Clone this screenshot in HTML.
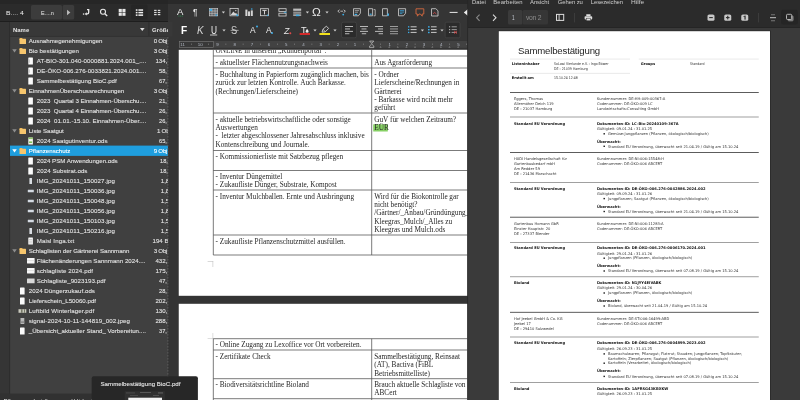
<!DOCTYPE html>
<html lang="de"><head><meta charset="utf-8"><title>Desktop</title>
<style>
html,body{margin:0;padding:0;background:#3a3a3a;}
#root{position:relative;width:800px;height:400px;overflow:hidden;background:#3a3a3a;}
#root div,#root svg{position:absolute;}
#root svg.l{left:0;top:0;}
#root div.p{left:0;top:0;width:800px;height:400px;will-change:transform;}
.t{white-space:pre;transform-origin:0 50%;}
</style></head><body><div id="root">
<div class="p" style="filter:blur(0.22px)">
<svg class="l" width="800" height="400" viewBox="0 0 800 400">
<rect x="0" y="0" width="168.5" height="400" fill="#404040"/>
<rect x="0" y="0" width="168" height="4" fill="#262626"/>
<rect x="0" y="4" width="168" height="17.5" fill="#2b2b2b"/>
<rect x="0" y="21" width="173" height="1" fill="#1e1e1e"/>
<rect x="0" y="22" width="10" height="378" fill="#353535"/>
<rect x="9.2" y="22" width="0.9" height="378" fill="#2c2c2c"/>
<rect x="0" y="393.6" width="168" height="7" fill="#313131"/>
<rect x="10" y="22" width="162.5" height="14.6" fill="#383838"/>
<rect x="10" y="35.9" width="158" height="0.8" fill="#303030"/>
<rect x="148.5" y="22" width="0.8" height="13.8" fill="#2a2a2a"/>
<rect x="31" y="5" width="31" height="14.5" fill="#3c3c3c" rx="1.5"/>
<rect x="62.6" y="5" width="11.6" height="14.5" fill="#3c3c3c" rx="1.5"/>
<g transform="translate(66 9.5)"><path d="M1 0.3 L4.4 3 L1 5.7Z" fill="#b8b8b8"/></g>
<g transform="translate(82 8)"><path d="M5 1.6 H6.7 V4.6 Q6.7 5.9 5.4 5.9 H4.4" fill="none" stroke="#e8e8e8" stroke-width="1.3"/><path d="M4.8 4.2 L2.6 5.9 L4.8 7.5Z" fill="#e8e8e8"/><rect x="0.9" y="5.4" width="1.3" height="1.3" fill="#e8e8e8"/></g>
<g transform="translate(99 8)"><circle cx="4" cy="3.8" r="2.5" fill="none" stroke="#e8e8e8" stroke-width="1.1"/><path d="M5.9 5.8 L8.2 8" stroke="#e8e8e8" stroke-width="1.4"/></g>
<rect x="118.7" y="8.9" width="3.1" height="3.2" fill="#e8e8e8"/>
<rect x="118.7" y="12.6" width="3.1" height="3.2" fill="#e8e8e8"/>
<rect x="122.4" y="8.9" width="3.1" height="3.2" fill="#e8e8e8"/>
<rect x="122.4" y="12.6" width="3.1" height="3.2" fill="#e8e8e8"/>
<rect x="131.2" y="4.5" width="16.3" height="15" fill="#262626" rx="1.5"/>
<rect x="135.8" y="9.3" width="1.7" height="1.5" fill="#f0f0f0"/>
<rect x="138.4" y="9.3" width="4.7" height="1.5" fill="#f0f0f0"/>
<rect x="135.8" y="11.85" width="1.7" height="1.5" fill="#f0f0f0"/>
<rect x="138.4" y="11.85" width="4.7" height="1.5" fill="#f0f0f0"/>
<rect x="135.8" y="14.4" width="1.7" height="1.5" fill="#f0f0f0"/>
<rect x="138.4" y="14.4" width="4.7" height="1.5" fill="#f0f0f0"/>
<rect x="154.1" y="9.8" width="2.5" height="1.2" fill="#dcdcdc"/>
<rect x="157.8" y="9.8" width="2.5" height="1.2" fill="#dcdcdc"/>
<rect x="154.1" y="11.9" width="2.5" height="1.2" fill="#dcdcdc"/>
<rect x="157.8" y="11.9" width="2.5" height="1.2" fill="#dcdcdc"/>
<rect x="154.1" y="14" width="2.5" height="1.2" fill="#dcdcdc"/>
<rect x="157.8" y="14" width="2.5" height="1.2" fill="#dcdcdc"/>
<g transform="translate(139.8 27.8)"><path d="M0.2 0.3 H4.8 L2.5 3.1Z" fill="#e0e0e0"/></g>
<rect x="19.5" y="37.9" width="3" height="1.6" fill="#eeb451" rx="0.5"/>
<rect x="19.5" y="38.8" width="6.5" height="5.2" fill="#f7c66d" rx="0.5"/>
<g transform="translate(12 48.8)"><path d="M0.2 0.5 H4.8 L2.5 3.6Z" fill="#8e8e8e"/></g>
<rect x="19.5" y="47.9" width="3" height="1.6" fill="#eeb451" rx="0.5"/>
<rect x="19.5" y="48.8" width="6.5" height="5.2" fill="#f7c66d" rx="0.5"/>
<rect x="28.3" y="57.5" width="4.6" height="7.1" fill="#fbfbfb" rx="0.4"/>
<rect x="29.1" y="59.4" width="0.9" height="3.4" fill="#cdcdcd"/>
<rect x="28.3" y="67.5" width="4.6" height="7.1" fill="#fbfbfb" rx="0.4"/>
<rect x="29.1" y="69.4" width="0.9" height="3.4" fill="#cdcdcd"/>
<rect x="28.3" y="77.5" width="4.6" height="7.1" fill="#fbfbfb" rx="0.4"/>
<g transform="translate(12 88.8)"><path d="M0.2 0.5 H4.8 L2.5 3.6Z" fill="#8e8e8e"/></g>
<rect x="19.5" y="87.9" width="3" height="1.6" fill="#eeb451" rx="0.5"/>
<rect x="19.5" y="88.8" width="6.5" height="5.2" fill="#f7c66d" rx="0.5"/>
<rect x="28.3" y="97.5" width="4.6" height="7.1" fill="#fbfbfb" rx="0.4"/>
<rect x="28.3" y="107.5" width="4.6" height="7.1" fill="#fbfbfb" rx="0.4"/>
<rect x="28.3" y="117.5" width="4.6" height="7.1" fill="#fbfbfb" rx="0.4"/>
<g transform="translate(12 128.8)"><path d="M0.2 0.5 H4.8 L2.5 3.6Z" fill="#8e8e8e"/></g>
<rect x="19.5" y="127.9" width="3" height="1.6" fill="#eeb451" rx="0.5"/>
<rect x="19.5" y="128.8" width="6.5" height="5.2" fill="#f7c66d" rx="0.5"/>
<rect x="28.3" y="137.5" width="4.6" height="7.1" fill="#f4f7f0" rx="0.4"/>
<rect x="28.3" y="137.5" width="4.6" height="1.6" fill="#8fc46a"/>
<rect x="29.1" y="141.4" width="3" height="1.6" fill="#7fbf55"/>
<rect x="10" y="145.6" width="158.5" height="10.3" fill="#1f9ede"/>
<g transform="translate(12 148.8)"><path d="M0.2 0.5 H4.8 L2.5 3.6Z" fill="#ffffff"/></g>
<rect x="19.5" y="147.9" width="3" height="1.6" fill="#eeb451" rx="0.5"/>
<rect x="19.5" y="148.8" width="6.5" height="5.2" fill="#f7c66d" rx="0.5"/>
<rect x="28.3" y="157.5" width="4.6" height="7.1" fill="#fbfbfb" rx="0.4"/>
<rect x="28.3" y="167.5" width="4.6" height="7.1" fill="#fbfbfb" rx="0.4"/>
<rect x="29.4" y="178" width="2.6" height="6" fill="#d9dde2" rx="0.3"/>
<rect x="27.8" y="189.7" width="6" height="2.6" fill="#d4dae2" rx="0.3"/>
<rect x="27.8" y="199.7" width="6" height="2.6" fill="#d4dae2" rx="0.3"/>
<rect x="27.8" y="209.7" width="6" height="2.6" fill="#d4dae2" rx="0.3"/>
<rect x="27.8" y="219.7" width="6" height="2.6" fill="#d4dae2" rx="0.3"/>
<rect x="29.4" y="228" width="2.6" height="6" fill="#d9dde2" rx="0.3"/>
<rect x="28.3" y="237.5" width="4.6" height="7.1" fill="#f6f6f6" rx="0.4"/>
<rect x="29" y="239" width="3.2" height="0.6" fill="#b5b5b5"/>
<rect x="29" y="240.8" width="3.2" height="0.6" fill="#b5b5b5"/>
<rect x="29" y="242.6" width="3.2" height="0.6" fill="#b5b5b5"/>
<g transform="translate(12 248.8)"><path d="M0.2 0.5 H4.8 L2.5 3.6Z" fill="#8e8e8e"/></g>
<rect x="19.5" y="247.9" width="3" height="1.6" fill="#eeb451" rx="0.5"/>
<rect x="19.5" y="248.8" width="6.5" height="5.2" fill="#f7c66d" rx="0.5"/>
<rect x="27" y="258" width="7.6" height="5.4" fill="#f6f6f6" rx="0.3"/>
<rect x="27" y="260.2" width="7.6" height="0.5" fill="#cfcfcf"/>
<rect x="27" y="268" width="7.6" height="5.4" fill="#f6f6f6" rx="0.3"/>
<rect x="27" y="270.2" width="7.6" height="0.5" fill="#cfcfcf"/>
<rect x="27" y="278.4" width="7.6" height="4.8" fill="#d8d8d8" rx="0.3"/>
<rect x="20" y="287.5" width="4.6" height="7.1" fill="#fbfbfb" rx="0.4"/>
<rect x="20" y="297.5" width="4.6" height="7.1" fill="#fbfbfb" rx="0.4"/>
<rect x="18.5" y="309.2" width="7.8" height="3.6" fill="#c9c9bd"/>
<rect x="21.1" y="309.2" width="1.4" height="3.6" fill="#6d705f"/>
<rect x="24.1" y="309.2" width="0.9" height="3.6" fill="#6d705f"/>
<rect x="20.5" y="318" width="3.8" height="6" fill="#b9b9b9"/>
<rect x="20.5" y="321.4" width="3.8" height="1.4" fill="#858585"/>
<rect x="20" y="327.5" width="4.6" height="7.1" fill="#fbfbfb" rx="0.4"/>
</svg>
<div class="t" style="top:9px;font-size:6.2px;line-height:7px;height:7px;color:#eeeeee;font-family:'Liberation Sans', sans-serif;left:6.4px;transform:scaleX(1.1007);">B.... 4</div>
<div class="t" style="top:9px;font-size:6.2px;line-height:7px;height:7px;color:#eeeeee;font-family:'Liberation Sans', sans-serif;left:40.5px;transform:scaleX(0.8856);">E....n</div>
<div class="t" style="top:27px;font-size:5.9px;line-height:6px;height:6px;color:#e4e4e4;font-family:'Liberation Sans', sans-serif;font-weight:700;left:13px;letter-spacing:0.038px;">Name</div>
<div class="t" style="top:27px;font-size:5.9px;line-height:6px;height:6px;color:#e4e4e4;font-family:'Liberation Sans', sans-serif;font-weight:700;left:152px;letter-spacing:0.128px;">Größe</div>
<div class="t" style="top:37px;font-size:6.15px;line-height:7px;height:7px;color:#e2e2e2;font-family:'Liberation Sans', sans-serif;left:28.75px;letter-spacing:0.016px;-webkit-text-stroke:0.1px currentColor;">Ausnahmegenehmigungen</div>
<div class="t" style="top:37px;font-size:6.15px;line-height:7px;height:7px;color:#e2e2e2;font-family:'Liberation Sans', sans-serif;left:153.75px;letter-spacing:-0.257px;-webkit-text-stroke:0.1px currentColor;">0 Obj</div>
<div class="t" style="top:47px;font-size:6.15px;line-height:7px;height:7px;color:#e2e2e2;font-family:'Liberation Sans', sans-serif;left:28.75px;letter-spacing:0.066px;-webkit-text-stroke:0.1px currentColor;">Bio bestätigungen</div>
<div class="t" style="top:47px;font-size:6.15px;line-height:7px;height:7px;color:#e2e2e2;font-family:'Liberation Sans', sans-serif;left:153.75px;letter-spacing:-0.257px;-webkit-text-stroke:0.1px currentColor;">3 Obj</div>
<div class="t" style="top:57px;font-size:6.15px;line-height:7px;height:7px;color:#e2e2e2;font-family:'Liberation Sans', sans-serif;left:36.75px;letter-spacing:0.057px;-webkit-text-stroke:0.1px currentColor;">AT-BIO-301.040-0000881.2024.001_....</div>
<div class="t" style="top:57px;font-size:6.15px;line-height:7px;height:7px;color:#e2e2e2;font-family:'Liberation Sans', sans-serif;left:155.5px;letter-spacing:-0.088px;-webkit-text-stroke:0.1px currentColor;">134,</div>
<div class="t" style="top:67px;font-size:6.15px;line-height:7px;height:7px;color:#e2e2e2;font-family:'Liberation Sans', sans-serif;left:36.75px;letter-spacing:0.027px;-webkit-text-stroke:0.1px currentColor;">DE-ÖKO-006.276-0033821.2024.001....</div>
<div class="t" style="top:67px;font-size:6.15px;line-height:7px;height:7px;color:#e2e2e2;font-family:'Liberation Sans', sans-serif;left:159.25px;transform:scaleX(0.9243);-webkit-text-stroke:0.1px currentColor;">58,</div>
<div class="t" style="top:77px;font-size:6.15px;line-height:7px;height:7px;color:#e2e2e2;font-family:'Liberation Sans', sans-serif;left:36.75px;letter-spacing:0.017px;-webkit-text-stroke:0.1px currentColor;">Sammelbestätigung BioC.pdf</div>
<div class="t" style="top:77px;font-size:6.15px;line-height:7px;height:7px;color:#e2e2e2;font-family:'Liberation Sans', sans-serif;left:159.25px;transform:scaleX(0.9243);-webkit-text-stroke:0.1px currentColor;">67,</div>
<div class="t" style="top:87px;font-size:6.15px;line-height:7px;height:7px;color:#e2e2e2;font-family:'Liberation Sans', sans-serif;left:28.75px;letter-spacing:-0.015px;-webkit-text-stroke:0.1px currentColor;">EinnahmenÜberschussrechnungen</div>
<div class="t" style="top:87px;font-size:6.15px;line-height:7px;height:7px;color:#e2e2e2;font-family:'Liberation Sans', sans-serif;left:153.75px;letter-spacing:-0.257px;-webkit-text-stroke:0.1px currentColor;">3 Obj</div>
<div class="t" style="top:97px;font-size:6.15px;line-height:7px;height:7px;color:#e2e2e2;font-family:'Liberation Sans', sans-serif;left:36.75px;letter-spacing:-0.020px;-webkit-text-stroke:0.1px currentColor;">2023  Quartal 3 Einnahmen-Überschu....</div>
<div class="t" style="top:97px;font-size:6.15px;line-height:7px;height:7px;color:#e2e2e2;font-family:'Liberation Sans', sans-serif;left:159.25px;transform:scaleX(0.9243);-webkit-text-stroke:0.1px currentColor;">21,</div>
<div class="t" style="top:107px;font-size:6.15px;line-height:7px;height:7px;color:#e2e2e2;font-family:'Liberation Sans', sans-serif;left:36.75px;letter-spacing:-0.020px;-webkit-text-stroke:0.1px currentColor;">2023  Quartal 4 Einnahmen-Überschu....</div>
<div class="t" style="top:107px;font-size:6.15px;line-height:7px;height:7px;color:#e2e2e2;font-family:'Liberation Sans', sans-serif;left:159.25px;transform:scaleX(0.9243);-webkit-text-stroke:0.1px currentColor;">26,</div>
<div class="t" style="top:117px;font-size:6.15px;line-height:7px;height:7px;color:#e2e2e2;font-family:'Liberation Sans', sans-serif;left:36.75px;letter-spacing:0.043px;-webkit-text-stroke:0.1px currentColor;">2024  01.01.-15.10. Einnahmen-Über....</div>
<div class="t" style="top:117px;font-size:6.15px;line-height:7px;height:7px;color:#e2e2e2;font-family:'Liberation Sans', sans-serif;left:159.25px;transform:scaleX(0.9243);-webkit-text-stroke:0.1px currentColor;">26,</div>
<div class="t" style="top:127px;font-size:6.15px;line-height:7px;height:7px;color:#e2e2e2;font-family:'Liberation Sans', sans-serif;left:28.75px;letter-spacing:-0.066px;-webkit-text-stroke:0.1px currentColor;">Liste Saatgut</div>
<div class="t" style="top:127px;font-size:6.15px;line-height:7px;height:7px;color:#e2e2e2;font-family:'Liberation Sans', sans-serif;left:157px;letter-spacing:-0.257px;-webkit-text-stroke:0.1px currentColor;">1 Obj</div>
<div class="t" style="top:137px;font-size:6.15px;line-height:7px;height:7px;color:#e2e2e2;font-family:'Liberation Sans', sans-serif;left:36.75px;letter-spacing:0.046px;-webkit-text-stroke:0.1px currentColor;">2024 Saatgutinventur.ods</div>
<div class="t" style="top:137px;font-size:6.15px;line-height:7px;height:7px;color:#e2e2e2;font-family:'Liberation Sans', sans-serif;left:159.25px;transform:scaleX(0.9243);-webkit-text-stroke:0.1px currentColor;">65,</div>
<div class="t" style="top:147px;font-size:6.15px;line-height:7px;height:7px;color:#ffffff;font-family:'Liberation Sans', sans-serif;left:28.75px;-webkit-text-stroke:0.1px currentColor;">Pflanzenschutz</div>
<div class="t" style="top:147px;font-size:6.15px;line-height:7px;height:7px;color:#ffffff;font-family:'Liberation Sans', sans-serif;left:153.75px;letter-spacing:-0.257px;-webkit-text-stroke:0.1px currentColor;">9 Obj</div>
<div class="t" style="top:157px;font-size:6.15px;line-height:7px;height:7px;color:#e2e2e2;font-family:'Liberation Sans', sans-serif;left:36.75px;-webkit-text-stroke:0.1px currentColor;">2024 PSM Anwendungen.ods</div>
<div class="t" style="top:157px;font-size:6.15px;line-height:7px;height:7px;color:#e2e2e2;font-family:'Liberation Sans', sans-serif;left:159.5px;transform:scaleX(0.9243);-webkit-text-stroke:0.1px currentColor;">18,</div>
<div class="t" style="top:167px;font-size:6.15px;line-height:7px;height:7px;color:#e2e2e2;font-family:'Liberation Sans', sans-serif;left:36.75px;letter-spacing:0.053px;-webkit-text-stroke:0.1px currentColor;">2024 Substrat.ods</div>
<div class="t" style="top:167px;font-size:6.15px;line-height:7px;height:7px;color:#e2e2e2;font-family:'Liberation Sans', sans-serif;left:159.5px;transform:scaleX(0.9243);-webkit-text-stroke:0.1px currentColor;">18,</div>
<div class="t" style="top:177px;font-size:6.15px;line-height:7px;height:7px;color:#e2e2e2;font-family:'Liberation Sans', sans-serif;left:36.75px;letter-spacing:0.111px;-webkit-text-stroke:0.1px currentColor;">IMG_20241011_150027.jpg</div>
<div class="t" style="top:177px;font-size:6.15px;line-height:7px;height:7px;color:#e2e2e2;font-family:'Liberation Sans', sans-serif;left:160.75px;-webkit-text-stroke:0.1px currentColor;">1,8</div>
<div class="t" style="top:187px;font-size:6.15px;line-height:7px;height:7px;color:#e2e2e2;font-family:'Liberation Sans', sans-serif;left:36.75px;letter-spacing:0.111px;-webkit-text-stroke:0.1px currentColor;">IMG_20241011_150036.jpg</div>
<div class="t" style="top:187px;font-size:6.15px;line-height:7px;height:7px;color:#e2e2e2;font-family:'Liberation Sans', sans-serif;left:160.75px;-webkit-text-stroke:0.1px currentColor;">1,8</div>
<div class="t" style="top:197px;font-size:6.15px;line-height:7px;height:7px;color:#e2e2e2;font-family:'Liberation Sans', sans-serif;left:36.75px;letter-spacing:0.111px;-webkit-text-stroke:0.1px currentColor;">IMG_20241011_150048.jpg</div>
<div class="t" style="top:197px;font-size:6.15px;line-height:7px;height:7px;color:#e2e2e2;font-family:'Liberation Sans', sans-serif;left:160.75px;-webkit-text-stroke:0.1px currentColor;">1,5</div>
<div class="t" style="top:207px;font-size:6.15px;line-height:7px;height:7px;color:#e2e2e2;font-family:'Liberation Sans', sans-serif;left:36.75px;letter-spacing:0.111px;-webkit-text-stroke:0.1px currentColor;">IMG_20241011_150056.jpg</div>
<div class="t" style="top:207px;font-size:6.15px;line-height:7px;height:7px;color:#e2e2e2;font-family:'Liberation Sans', sans-serif;left:160.75px;-webkit-text-stroke:0.1px currentColor;">1,8</div>
<div class="t" style="top:217px;font-size:6.15px;line-height:7px;height:7px;color:#e2e2e2;font-family:'Liberation Sans', sans-serif;left:36.75px;letter-spacing:0.111px;-webkit-text-stroke:0.1px currentColor;">IMG_20241011_150103.jpg</div>
<div class="t" style="top:217px;font-size:6.15px;line-height:7px;height:7px;color:#e2e2e2;font-family:'Liberation Sans', sans-serif;left:160.75px;-webkit-text-stroke:0.1px currentColor;">1,5</div>
<div class="t" style="top:227px;font-size:6.15px;line-height:7px;height:7px;color:#e2e2e2;font-family:'Liberation Sans', sans-serif;left:36.75px;letter-spacing:0.111px;-webkit-text-stroke:0.1px currentColor;">IMG_20241011_150216.jpg</div>
<div class="t" style="top:227px;font-size:6.15px;line-height:7px;height:7px;color:#e2e2e2;font-family:'Liberation Sans', sans-serif;left:160.75px;-webkit-text-stroke:0.1px currentColor;">1,5</div>
<div class="t" style="top:237px;font-size:6.15px;line-height:7px;height:7px;color:#e2e2e2;font-family:'Liberation Sans', sans-serif;left:36.75px;letter-spacing:0.094px;-webkit-text-stroke:0.1px currentColor;">Maisl Inga.txt</div>
<div class="t" style="top:237px;font-size:6.15px;line-height:7px;height:7px;color:#e2e2e2;font-family:'Liberation Sans', sans-serif;left:152.5px;-webkit-text-stroke:0.1px currentColor;">194 B</div>
<div class="t" style="top:247px;font-size:6.15px;line-height:7px;height:7px;color:#e2e2e2;font-family:'Liberation Sans', sans-serif;left:28.75px;letter-spacing:-0.054px;-webkit-text-stroke:0.1px currentColor;">Schlaglisten der Gärtnerei Sannmann</div>
<div class="t" style="top:247px;font-size:6.15px;line-height:7px;height:7px;color:#e2e2e2;font-family:'Liberation Sans', sans-serif;left:153.75px;letter-spacing:-0.257px;-webkit-text-stroke:0.1px currentColor;">3 Obj</div>
<div class="t" style="top:257px;font-size:6.15px;line-height:7px;height:7px;color:#e2e2e2;font-family:'Liberation Sans', sans-serif;left:36.75px;letter-spacing:0.015px;-webkit-text-stroke:0.1px currentColor;">Flächenänderungen Sannmann 2024....</div>
<div class="t" style="top:257px;font-size:6.15px;line-height:7px;height:7px;color:#e2e2e2;font-family:'Liberation Sans', sans-serif;left:155.5px;letter-spacing:-0.088px;-webkit-text-stroke:0.1px currentColor;">432,</div>
<div class="t" style="top:267px;font-size:6.15px;line-height:7px;height:7px;color:#e2e2e2;font-family:'Liberation Sans', sans-serif;left:36.75px;letter-spacing:0.098px;-webkit-text-stroke:0.1px currentColor;">schlagliste 2024.pdf</div>
<div class="t" style="top:267px;font-size:6.15px;line-height:7px;height:7px;color:#e2e2e2;font-family:'Liberation Sans', sans-serif;left:155.5px;letter-spacing:-0.088px;-webkit-text-stroke:0.1px currentColor;">175,</div>
<div class="t" style="top:277px;font-size:6.15px;line-height:7px;height:7px;color:#e2e2e2;font-family:'Liberation Sans', sans-serif;left:36.75px;letter-spacing:0.065px;-webkit-text-stroke:0.1px currentColor;">Schlagliste_9023193.pdf</div>
<div class="t" style="top:277px;font-size:6.15px;line-height:7px;height:7px;color:#e2e2e2;font-family:'Liberation Sans', sans-serif;left:159.25px;transform:scaleX(0.9243);-webkit-text-stroke:0.1px currentColor;">47,</div>
<div class="t" style="top:287px;font-size:6.15px;line-height:7px;height:7px;color:#e2e2e2;font-family:'Liberation Sans', sans-serif;left:28.75px;letter-spacing:0.049px;-webkit-text-stroke:0.1px currentColor;">2024 Düngerzukauf.ods</div>
<div class="t" style="top:287px;font-size:6.15px;line-height:7px;height:7px;color:#e2e2e2;font-family:'Liberation Sans', sans-serif;left:159.25px;transform:scaleX(0.9243);-webkit-text-stroke:0.1px currentColor;">28,</div>
<div class="t" style="top:297px;font-size:6.15px;line-height:7px;height:7px;color:#e2e2e2;font-family:'Liberation Sans', sans-serif;left:28.75px;-webkit-text-stroke:0.1px currentColor;">Lieferschein_L50060.pdf</div>
<div class="t" style="top:297px;font-size:6.15px;line-height:7px;height:7px;color:#e2e2e2;font-family:'Liberation Sans', sans-serif;left:155.5px;letter-spacing:-0.088px;-webkit-text-stroke:0.1px currentColor;">202,</div>
<div class="t" style="top:307px;font-size:6.15px;line-height:7px;height:7px;color:#e2e2e2;font-family:'Liberation Sans', sans-serif;left:28.75px;letter-spacing:0.112px;-webkit-text-stroke:0.1px currentColor;">Luftbild Winterlager.pdf</div>
<div class="t" style="top:307px;font-size:6.15px;line-height:7px;height:7px;color:#e2e2e2;font-family:'Liberation Sans', sans-serif;left:155.5px;letter-spacing:-0.088px;-webkit-text-stroke:0.1px currentColor;">130,</div>
<div class="t" style="top:317px;font-size:6.15px;line-height:7px;height:7px;color:#e2e2e2;font-family:'Liberation Sans', sans-serif;left:28.75px;letter-spacing:0.081px;-webkit-text-stroke:0.1px currentColor;">signal-2024-10-11-144819_002.jpeg</div>
<div class="t" style="top:317px;font-size:6.15px;line-height:7px;height:7px;color:#e2e2e2;font-family:'Liberation Sans', sans-serif;left:155.5px;letter-spacing:-0.088px;-webkit-text-stroke:0.1px currentColor;">288,</div>
<div class="t" style="top:327px;font-size:6.15px;line-height:7px;height:7px;color:#e2e2e2;font-family:'Liberation Sans', sans-serif;left:28.75px;-webkit-text-stroke:0.1px currentColor;">_Übersicht_aktueller Stand_ Vorbereitun....</div>
<div class="t" style="top:327px;font-size:6.15px;line-height:7px;height:7px;color:#e2e2e2;font-family:'Liberation Sans', sans-serif;left:159.25px;transform:scaleX(0.9243);-webkit-text-stroke:0.1px currentColor;">37,</div>
<div class="t" style="top:397px;font-size:6.15px;line-height:7px;height:7px;color:#e2e2e2;font-family:'Liberation Sans', sans-serif;left:1.5px;">„Pflanzenschutz&quot; ausgewählt (enthält 9 Objekte)</div>
</div>
<div class="p" style="filter:blur(0.33px)">
<svg class="l" width="800" height="400" viewBox="0 0 800 400">
<rect x="168" y="0" width="300.5" height="400" fill="#343434"/>
<rect x="168" y="0" width="300.5" height="4" fill="#292929"/>
<rect x="168" y="4" width="300.5" height="36.5" fill="#353535"/>
<rect x="168" y="22" width="4.6" height="14.6" fill="#383838"/>
<path d="M167.9 37 V400" stroke="#666666" stroke-width="0.7" stroke-dasharray="1.6 1.4"/>
<rect x="179" y="41" width="288.5" height="6.8" fill="#424242"/>
<rect x="179.3" y="41.3" width="34.2" height="6.2" fill="#383838" stroke="#7a7a7a" stroke-width="0.6"/>
<rect x="191.2" y="43.5" width="0.6" height="1.5" fill="#808080"/>
<rect x="208.4" y="43.5" width="0.6" height="1.5" fill="#808080"/>
<rect x="225.6" y="43.5" width="0.6" height="1.5" fill="#808080"/>
<rect x="242.8" y="43.5" width="0.6" height="1.5" fill="#808080"/>
<rect x="260" y="43.5" width="0.6" height="1.5" fill="#808080"/>
<rect x="277.2" y="43.5" width="0.6" height="1.5" fill="#808080"/>
<rect x="294.4" y="43.5" width="0.6" height="1.5" fill="#808080"/>
<rect x="311.6" y="43.5" width="0.6" height="1.5" fill="#808080"/>
<rect x="328.8" y="43.5" width="0.6" height="1.5" fill="#808080"/>
<rect x="346" y="43.5" width="0.6" height="1.5" fill="#808080"/>
<rect x="363.2" y="43.5" width="0.6" height="1.5" fill="#808080"/>
<rect x="380.4" y="43.5" width="0.6" height="1.5" fill="#808080"/>
<rect x="397.6" y="43.5" width="0.6" height="1.5" fill="#808080"/>
<rect x="414.8" y="43.5" width="0.6" height="1.5" fill="#808080"/>
<rect x="432" y="43.5" width="0.6" height="1.5" fill="#808080"/>
<rect x="449.2" y="43.5" width="0.6" height="1.5" fill="#808080"/>
<rect x="466.4" y="43.5" width="0.6" height="1.5" fill="#808080"/>
<g transform="translate(369 40.6)"><path d="M0.6 0.4 H4.8 L2.7 2.8Z M2.7 3.4 L4.8 5.4 V7 H0.6 V5.4Z" fill="#4a4a4a" stroke="#d8d8d8" stroke-width="0.6"/></g>
<rect x="380.3" y="46" width="0.5" height="1.4" fill="#858585"/>
<rect x="379.6" y="47" width="1.9" height="0.5" fill="#858585"/>
<rect x="388.92" y="46" width="0.5" height="1.4" fill="#858585"/>
<rect x="388.22" y="47" width="1.9" height="0.5" fill="#858585"/>
<rect x="397.54" y="46" width="0.5" height="1.4" fill="#858585"/>
<rect x="396.84" y="47" width="1.9" height="0.5" fill="#858585"/>
<rect x="406.16" y="46" width="0.5" height="1.4" fill="#858585"/>
<rect x="405.46" y="47" width="1.9" height="0.5" fill="#858585"/>
<rect x="414.78" y="46" width="0.5" height="1.4" fill="#858585"/>
<rect x="414.08" y="47" width="1.9" height="0.5" fill="#858585"/>
<rect x="423.4" y="46" width="0.5" height="1.4" fill="#858585"/>
<rect x="422.7" y="47" width="1.9" height="0.5" fill="#858585"/>
<rect x="432.02" y="46" width="0.5" height="1.4" fill="#858585"/>
<rect x="431.32" y="47" width="1.9" height="0.5" fill="#858585"/>
<rect x="440.64" y="46" width="0.5" height="1.4" fill="#858585"/>
<rect x="439.94" y="47" width="1.9" height="0.5" fill="#858585"/>
<rect x="449.26" y="46" width="0.5" height="1.4" fill="#858585"/>
<rect x="448.56" y="47" width="1.9" height="0.5" fill="#858585"/>
<rect x="457.88" y="46" width="0.5" height="1.4" fill="#858585"/>
<rect x="457.18" y="47" width="1.9" height="0.5" fill="#858585"/>
<rect x="178.75" y="49.8" width="288.75" height="246" fill="#ffffff"/>
<rect x="178.75" y="303.8" width="288.75" height="97" fill="#ffffff"/>
<rect x="178.4" y="15.6" width="1" height="0.9" fill="#2a8a4c"/>
<rect x="180.1" y="15.6" width="1" height="0.9" fill="#2a8a4c"/>
<rect x="181.8" y="15.6" width="1" height="0.9" fill="#2a8a4c"/>
<g transform="translate(209 8.2)"><rect x="0.3" y="0.3" width="8.4" height="7.4" fill="#5d6064" stroke="#d4d4d4" stroke-width="0.6"/><path d="M3 0.3 V7.7 M6 0.3 V7.7 M0.3 2.8 H8.7 M0.3 5.2 H8.7" stroke="#d4d4d4" stroke-width="0.5"/><rect x="0.6" y="0.6" width="2.4" height="2.2" fill="#3daee9"/><path d="M6 6.2 H8.7 L7.4 8Z" fill="#3daee9"/></g>
<g transform="translate(221.8 11.5)"><path d="M0 0.1 H3.2 L1.6 2.1Z" fill="#d0d0d0"/></g>
<g transform="translate(229.6 8.2)"><rect x="0.4" y="0.4" width="8.2" height="7.2" fill="none" stroke="#d4d4d4" stroke-width="0.8"/><path d="M1 6.8 L3.8 3.4 L5.6 5.4 L6.4 4.6 L8 6.8Z" fill="#d4d4d4"/><circle cx="6.2" cy="2.4" r="0.7" fill="#d4d4d4"/><circle cx="7.6" cy="7" r="1" fill="#3daee9"/></g>
<g transform="translate(245 8.2)"><rect x="0.4" y="1.4" width="2" height="6.4" fill="#d4d4d4"/><rect x="3" y="3.2" width="2" height="4.6" fill="#d4d4d4"/><rect x="5.8" y="2.2" width="2" height="5.6" fill="#d4d4d4"/><circle cx="6.8" cy="0.8" r="0.8" fill="#3daee9"/></g>
<g transform="translate(260 8.2)"><rect x="0.5" y="0.5" width="8" height="7" fill="none" stroke="#d4d4d4" stroke-width="0.8"/><path d="M2.4 2.2 H6.6 M4.5 2.2 V6.2" stroke="#d4d4d4" stroke-width="1"/><circle cx="7.6" cy="7" r="0.8" fill="#3daee9"/></g>
<g transform="translate(278.4 8.2)"><rect x="0.5" y="0.5" width="7.2" height="2.8" fill="none" stroke="#d4d4d4" stroke-width="0.8"/><rect x="0.5" y="5" width="7.2" height="2.8" fill="none" stroke="#d4d4d4" stroke-width="0.8"/><path d="M5.4 4.1 H8.2" stroke="#3daee9" stroke-width="0.8"/></g>
<g transform="translate(293 8.2)"><rect x="0.2" y="0.4" width="8" height="2.2" fill="#bdbdbd"/><rect x="0.2" y="3.4" width="8" height="2.2" fill="#8e8e8e"/><rect x="0.2" y="6.2" width="8" height="1.4" fill="#bdbdbd"/><rect x="3" y="6.4" width="3.4" height="1.6" fill="#3daee9"/></g>
<g transform="translate(305.8 11.5)"><path d="M0 0.1 H3.2 L1.6 2.1Z" fill="#d0d0d0"/></g>
<g transform="translate(325.4 11.5)"><path d="M0 0.1 H3.2 L1.6 2.1Z" fill="#d0d0d0"/></g>
<g transform="translate(337 8.2)"><path d="M2.6 1.6 L0.8 3 L2.6 4.4 M6.6 1.6 L8.4 3 L6.6 4.4 M3.4 3 H6" fill="none" stroke="#d4d4d4" stroke-width="0.8"/><circle cx="6.2" cy="6.4" r="0.9" fill="#3daee9"/></g>
<g transform="translate(353 8.2)"><path d="M0.5 0.5 H7.4 V5 L5.4 7.6 H0.5Z" fill="none" stroke="#d4d4d4" stroke-width="0.8"/><path d="M1.8 2.4 H6 M1.8 4 H5" stroke="#d4d4d4" stroke-width="0.6"/><rect x="1.6" y="5.6" width="2.6" height="1.2" fill="#3daee9"/></g>
<g transform="translate(368 8.2)"><path d="M0.5 0.5 H4.6 V7.6 H0.5Z" fill="none" stroke="#d4d4d4" stroke-width="0.8"/><path d="M5.6 1.4 H7.2 V7.6 H5.6" fill="none" stroke="#d4d4d4" stroke-width="0.7"/><rect x="1.6" y="5.4" width="2" height="1.2" fill="#3daee9"/></g>
<g transform="translate(382 8.2)"><path d="M0.5 0.5 H5.4 V7.6 H0.5Z" fill="none" stroke="#d4d4d4" stroke-width="0.8"/><path d="M5.4 5.4 H7 V8 L6.2 7.4 L5.4 8Z" fill="#3daee9"/></g>
<g transform="translate(398 8.2)"><path d="M0.5 0.5 H7.6 V5 L5.6 7.6 H0.5Z" fill="none" stroke="#d4d4d4" stroke-width="0.8"/><path d="M1.8 2.4 H6.2 M1.8 3.9 H6.2 M1.8 5.4 H4.4" stroke="#3daee9" stroke-width="0.7"/></g>
<g transform="translate(415.4 8.2)"><path d="M0.6 0.6 H8.4 V5.8 H6.8 V8 L5 5.8 H3.6 L2 8 V5.8 H0.6Z" fill="none" stroke="#d56a40" stroke-width="0.9"/></g>
<g transform="translate(431 8.2)"><path d="M0.5 0.5 H4.8 L7 2.6 V7.8 H0.5Z" fill="none" stroke="#d4d4d4" stroke-width="0.8"/><path d="M2 5.6 L3.6 4.2 L5.4 5.8" fill="none" stroke="#e04a4a" stroke-width="0.8"/></g>
<rect x="449.6" y="11.9" width="8" height="1" fill="#e8e8e8"/>
<g transform="translate(463.4 8.8)"><path d="M4.6 0.2 V7.2 L0.4 3.7Z" fill="#ededed"/></g>
<rect x="210" y="34.6" width="7.2" height="0.8" fill="#ececec"/>
<g transform="translate(222.4 29.5)"><path d="M0 0.1 H3.2 L1.6 2.1Z" fill="#d0d0d0"/></g>
<rect x="230.6" y="29.9" width="8" height="0.7" fill="#cfcfcf"/>
<circle cx="257" cy="26.5" r="1" fill="#3daee9"/>
<circle cx="272" cy="33" r="1" fill="#3daee9"/>
<circle cx="290.3" cy="33.2" r="1" fill="#e04a4a"/>
<g transform="translate(305.6 28.8)"><path d="M1.5 0 L2.8 2 A1.4 1.4 0 1 1 0.2 2Z" fill="#ededed"/></g>
<rect x="299.6" y="33" width="10.4" height="2" fill="#d42a2a"/>
<g transform="translate(313.4 29.5)"><path d="M0 0.1 H3.2 L1.6 2.1Z" fill="#d0d0d0"/></g>
<g transform="translate(320 25.6)"><path d="M2 6.6 L3 3.6 L6.4 0.6 L8.6 2.8 L5.4 6.2Z" fill="none" stroke="#d4d4d4" stroke-width="0.9"/><path d="M3 3.6 L5.4 6.2" stroke="#d4d4d4" stroke-width="0.8"/></g>
<rect x="319.4" y="33" width="10.6" height="2" fill="#f2e11a"/>
<g transform="translate(333.4 29.5)"><path d="M0 0.1 H3.2 L1.6 2.1Z" fill="#d0d0d0"/></g>
<rect x="341.6" y="22.2" width="14.8" height="15.6" fill="#2b2b2b" rx="1.5" stroke="#4b4b4b" stroke-width="0.6"/>
<rect x="345" y="26.1" width="8" height="0.9" fill="#c9c9c9"/>
<rect x="345" y="28.5" width="5" height="0.9" fill="#c9c9c9"/>
<rect x="345" y="30.9" width="8" height="0.9" fill="#c9c9c9"/>
<rect x="345" y="33.3" width="4.4" height="0.9" fill="#c9c9c9"/>
<rect x="360" y="26.1" width="8" height="0.9" fill="#c9c9c9"/>
<rect x="361.5" y="28.5" width="5" height="0.9" fill="#c9c9c9"/>
<rect x="360" y="30.9" width="8" height="0.9" fill="#c9c9c9"/>
<rect x="361.8" y="33.3" width="4.4" height="0.9" fill="#c9c9c9"/>
<rect x="375" y="26.1" width="8" height="0.9" fill="#c9c9c9"/>
<rect x="378" y="28.5" width="5" height="0.9" fill="#c9c9c9"/>
<rect x="375" y="30.9" width="8" height="0.9" fill="#c9c9c9"/>
<rect x="378.6" y="33.3" width="4.4" height="0.9" fill="#c9c9c9"/>
<rect x="390" y="26.1" width="8" height="0.9" fill="#aaaaaa"/>
<rect x="390" y="28.5" width="8" height="0.9" fill="#aaaaaa"/>
<rect x="390" y="30.9" width="8" height="0.9" fill="#aaaaaa"/>
<rect x="390" y="33.3" width="8" height="0.9" fill="#aaaaaa"/>
<rect x="408" y="26.2" width="1.3" height="1.3" fill="#3daee9"/>
<rect x="410.6" y="26.3" width="6" height="1" fill="#c9c9c9"/>
<rect x="408" y="29" width="1.3" height="1.3" fill="#3daee9"/>
<rect x="410.6" y="29.1" width="6" height="1" fill="#c9c9c9"/>
<rect x="408" y="31.8" width="1.3" height="1.3" fill="#3daee9"/>
<rect x="410.6" y="31.9" width="6" height="1" fill="#c9c9c9"/>
<g transform="translate(420.8 29.5)"><path d="M0 0.1 H3.2 L1.6 2.1Z" fill="#d0d0d0"/></g>
<rect x="428" y="26.2" width="1.6" height="1.4" fill="#3daee9"/>
<rect x="431" y="26.3" width="5.6" height="1" fill="#c9c9c9"/>
<rect x="428" y="29" width="1.6" height="1.4" fill="#3daee9"/>
<rect x="431" y="29.1" width="5.6" height="1" fill="#c9c9c9"/>
<rect x="428" y="31.8" width="1.6" height="1.4" fill="#3daee9"/>
<rect x="431" y="31.9" width="5.6" height="1" fill="#c9c9c9"/>
<g transform="translate(440.4 29.5)"><path d="M0 0.1 H3.2 L1.6 2.1Z" fill="#d0d0d0"/></g>
<rect x="445.2" y="22.2" width="14.8" height="15.6" fill="#2b2b2b" rx="1.5" stroke="#4b4b4b" stroke-width="0.6"/>
<rect x="449" y="26.2" width="1.2" height="1.2" fill="#a8a8a8"/>
<rect x="451.6" y="26.3" width="5.2" height="1" fill="#9a9a9a"/>
<rect x="449" y="29" width="1.2" height="1.2" fill="#a8a8a8"/>
<rect x="451.6" y="29.1" width="5.2" height="1" fill="#9a9a9a"/>
<rect x="449" y="31.8" width="1.2" height="1.2" fill="#a8a8a8"/>
<rect x="451.6" y="31.9" width="5.2" height="1" fill="#9a9a9a"/>
<path d="M454.2 31 L456.8 33.6 M456.8 31 L454.2 33.6" stroke="#e23b3b" stroke-width="0.9"/>
<rect x="212.85" y="49.8" width="0.8" height="205.2" fill="#5a5a5a"/>
<rect x="371.35" y="49.8" width="0.8" height="205.2" fill="#5a5a5a"/>
<rect x="213.25" y="55.6" width="254.25" height="0.8" fill="#5a5a5a"/>
<rect x="213.25" y="67.6" width="254.25" height="0.8" fill="#5a5a5a"/>
<rect x="213.25" y="112.6" width="254.25" height="0.8" fill="#5a5a5a"/>
<rect x="213.25" y="150.1" width="254.25" height="0.8" fill="#5a5a5a"/>
<rect x="213.25" y="170.1" width="254.25" height="0.8" fill="#5a5a5a"/>
<rect x="213.25" y="189.6" width="254.25" height="0.8" fill="#5a5a5a"/>
<rect x="213.25" y="234.6" width="254.25" height="0.8" fill="#5a5a5a"/>
<rect x="213.25" y="254.6" width="254.25" height="0.8" fill="#5a5a5a"/>
<rect x="373.2" y="124.3" width="14.6" height="7.2" fill="#86d064"/>
<rect x="207.6" y="261" width="5.6" height="0.6" fill="#c0c0c0"/>
<rect x="212.6" y="261" width="0.6" height="6" fill="#c0c0c0"/>
<rect x="207.6" y="338.4" width="5.6" height="0.6" fill="#c8c8c8"/>
<rect x="212.6" y="333" width="0.6" height="6" fill="#c8c8c8"/>
<rect x="212.85" y="338.75" width="0.8" height="61.25" fill="#5a5a5a"/>
<rect x="371.35" y="338.75" width="0.8" height="61.25" fill="#5a5a5a"/>
<rect x="213.25" y="338.35" width="254.25" height="0.8" fill="#5a5a5a"/>
<rect x="213.25" y="349.6" width="254.25" height="0.8" fill="#5a5a5a"/>
<rect x="213.25" y="378.35" width="254.25" height="0.8" fill="#5a5a5a"/>
<rect x="213.25" y="398.35" width="254.25" height="0.8" fill="#5a5a5a"/>
</svg>
<div class="t" style="top:42px;font-size:4.4px;line-height:5px;height:5px;color:#b4bac6;font-family:'Liberation Sans', sans-serif;left:180.3px;">11</div>
<div class="t" style="top:42px;font-size:4.4px;line-height:5px;height:5px;color:#b4bac6;font-family:'Liberation Sans', sans-serif;left:197.8px;">10</div>
<div class="t" style="top:42px;font-size:4.4px;line-height:5px;height:5px;color:#b4bac6;font-family:'Liberation Sans', sans-serif;left:216.15px;">9</div>
<div class="t" style="top:42px;font-size:4.4px;line-height:5px;height:5px;color:#b4bac6;font-family:'Liberation Sans', sans-serif;left:233.45px;">8</div>
<div class="t" style="top:42px;font-size:4.4px;line-height:5px;height:5px;color:#b4bac6;font-family:'Liberation Sans', sans-serif;left:250.65px;">7</div>
<div class="t" style="top:42px;font-size:4.4px;line-height:5px;height:5px;color:#b4bac6;font-family:'Liberation Sans', sans-serif;left:267.85px;">6</div>
<div class="t" style="top:42px;font-size:4.4px;line-height:5px;height:5px;color:#b4bac6;font-family:'Liberation Sans', sans-serif;left:285.05px;">5</div>
<div class="t" style="top:42px;font-size:4.4px;line-height:5px;height:5px;color:#b4bac6;font-family:'Liberation Sans', sans-serif;left:302.25px;">4</div>
<div class="t" style="top:42px;font-size:4.4px;line-height:5px;height:5px;color:#b4bac6;font-family:'Liberation Sans', sans-serif;left:319.45px;">3</div>
<div class="t" style="top:42px;font-size:4.4px;line-height:5px;height:5px;color:#b4bac6;font-family:'Liberation Sans', sans-serif;left:336.65px;">2</div>
<div class="t" style="top:42px;font-size:4.4px;line-height:5px;height:5px;color:#b4bac6;font-family:'Liberation Sans', sans-serif;left:353.85px;">1</div>
<div class="t" style="top:42px;font-size:4.4px;line-height:5px;height:5px;color:#b4bac6;font-family:'Liberation Sans', sans-serif;left:388.45px;">1</div>
<div class="t" style="top:42px;font-size:4.4px;line-height:5px;height:5px;color:#b4bac6;font-family:'Liberation Sans', sans-serif;left:405.65px;">2</div>
<div class="t" style="top:42px;font-size:4.4px;line-height:5px;height:5px;color:#b4bac6;font-family:'Liberation Sans', sans-serif;left:422.85px;">3</div>
<div class="t" style="top:42px;font-size:4.4px;line-height:5px;height:5px;color:#b4bac6;font-family:'Liberation Sans', sans-serif;left:440.05px;">4</div>
<div class="t" style="top:42px;font-size:4.4px;line-height:5px;height:5px;color:#b4bac6;font-family:'Liberation Sans', sans-serif;left:457.25px;">5</div>
<div class="t" style="top:6px;font-size:9.4px;line-height:11px;height:11px;color:#ececec;font-family:'Liberation Sans', sans-serif;left:177.4px;transform:scaleX(1.0214);">A</div>
<div class="t" style="top:7px;font-size:8.6px;line-height:10px;height:10px;color:#ececec;font-family:'Liberation Sans', sans-serif;left:193.2px;transform:scaleX(0.9514);">¶</div>
<div class="t" style="top:7px;font-size:10px;line-height:11px;height:11px;color:#ececec;font-family:'Liberation Sans', sans-serif;left:312px;transform:scaleX(1.1758);">Ω</div>
<div class="t" style="top:25px;font-size:10.4px;line-height:11px;height:11px;color:#ffffff;font-family:'Liberation Sans', sans-serif;font-weight:700;left:181.4px;transform:scaleX(0.9749);">F</div>
<div class="t" style="top:25px;font-size:10.2px;line-height:11px;height:11px;color:#d6d6d6;font-family:'Liberation Sans', sans-serif;font-style:italic;left:196.8px;transform:scaleX(0.9710);">K</div>
<div class="t" style="top:25px;font-size:10.2px;line-height:11px;height:11px;color:#ececec;font-family:'Liberation Sans', sans-serif;left:210.6px;transform:scaleX(0.8153);">U</div>
<div class="t" style="top:25px;font-size:10px;line-height:11px;height:11px;color:#cfcfcf;font-family:'Liberation Sans', sans-serif;left:231.4px;transform:scaleX(0.9293);">S</div>
<div class="t" style="top:25px;font-size:8.6px;line-height:10px;height:10px;color:#ececec;font-family:'Liberation Sans', sans-serif;left:250.4px;transform:scaleX(0.9766);">A</div>
<div class="t" style="top:25px;font-size:8.6px;line-height:10px;height:10px;color:#ececec;font-family:'Liberation Sans', sans-serif;left:265.6px;transform:scaleX(0.9766);">A</div>
<div class="t" style="top:26px;font-size:9.2px;line-height:10px;height:10px;color:#ececec;font-family:'Liberation Sans', sans-serif;font-style:italic;left:284.4px;transform:scaleX(0.9600);">Z</div>
<div class="t" style="top:25px;font-size:9.2px;line-height:10px;height:10px;color:#ececec;font-family:'Liberation Sans', sans-serif;left:300.6px;transform:scaleX(0.9956);">T</div>
<div style="left:178px;top:50px;width:290px;height:6px;overflow:hidden;"><div class="t" style="left:37.5px;top:-3px;font-size:7.25px;line-height:8px;height:8px;color:#262626;font-family:'Liberation Serif', serif;">ONLINE in unserem „Kundenportal“.</div></div>
<div class="t" style="top:59px;font-size:7.25px;line-height:8px;height:8px;color:#262626;font-family:'Liberation Serif', serif;left:215.5px;">- aktuellster Flächennutzungsnachweis</div>
<div class="t" style="top:59px;font-size:7.25px;line-height:8px;height:8px;color:#262626;font-family:'Liberation Serif', serif;left:374.25px;letter-spacing:-0.047px;">Aus Agrarförderung</div>
<div class="t" style="top:71px;font-size:7.25px;line-height:8px;height:8px;color:#262626;font-family:'Liberation Serif', serif;left:215.5px;">- Buchhaltung in Papierform zugänglich machen, bis</div>
<div class="t" style="top:79px;font-size:7.25px;line-height:8px;height:8px;color:#262626;font-family:'Liberation Serif', serif;left:215.5px;">zurück zur letzten Kontrolle. Auch Barkasse.</div>
<div class="t" style="top:88px;font-size:7.25px;line-height:8px;height:8px;color:#262626;font-family:'Liberation Serif', serif;left:215.5px;">(Rechnungen/Lieferscheine)</div>
<div class="t" style="top:71px;font-size:7.25px;line-height:8px;height:8px;color:#262626;font-family:'Liberation Serif', serif;left:374.25px;">- Ordner</div>
<div class="t" style="top:79px;font-size:7.25px;line-height:8px;height:8px;color:#262626;font-family:'Liberation Serif', serif;left:374.25px;">Lieferscheine/Rechnungen in</div>
<div class="t" style="top:88px;font-size:7.25px;line-height:8px;height:8px;color:#262626;font-family:'Liberation Serif', serif;left:374.25px;">Gärtnerei</div>
<div class="t" style="top:96px;font-size:7.25px;line-height:8px;height:8px;color:#262626;font-family:'Liberation Serif', serif;left:374.25px;">- Barkasse wird nciht mehr</div>
<div class="t" style="top:104px;font-size:7.25px;line-height:8px;height:8px;color:#262626;font-family:'Liberation Serif', serif;left:374.25px;">geführt</div>
<div class="t" style="top:116px;font-size:7.25px;line-height:8px;height:8px;color:#262626;font-family:'Liberation Serif', serif;left:215.5px;">- aktuelle betriebswirtschaftliche oder sonstige</div>
<div class="t" style="top:124px;font-size:7.25px;line-height:8px;height:8px;color:#262626;font-family:'Liberation Serif', serif;left:215.5px;">Auswertungen</div>
<div class="t" style="top:132px;font-size:7.25px;line-height:8px;height:8px;color:#262626;font-family:'Liberation Serif', serif;left:215.5px;">-  letzter abgeschlossener Jahresabschluss inklusive</div>
<div class="t" style="top:141px;font-size:7.25px;line-height:8px;height:8px;color:#262626;font-family:'Liberation Serif', serif;left:215.5px;">Kontenschreibung und Journale.</div>
<div class="t" style="top:116px;font-size:7.25px;line-height:8px;height:8px;color:#262626;font-family:'Liberation Serif', serif;left:374.25px;">GuV für welchen Zeitraum?</div>
<div class="t" style="top:124px;font-size:7.25px;line-height:8px;height:8px;color:#262626;font-family:'Liberation Serif', serif;left:374.25px;">EÜR</div>
<div class="t" style="top:153px;font-size:7.25px;line-height:8px;height:8px;color:#262626;font-family:'Liberation Serif', serif;left:215.5px;">- Kommissionierliste mit Satzbezug pflegen</div>
<div class="t" style="top:173px;font-size:7.25px;line-height:8px;height:8px;color:#262626;font-family:'Liberation Serif', serif;left:215.5px;">- Inventur Düngemittel</div>
<div class="t" style="top:181px;font-size:7.25px;line-height:8px;height:8px;color:#262626;font-family:'Liberation Serif', serif;left:215.5px;">- Zukaufliste Dünger, Substrate, Kompost</div>
<div class="t" style="top:193px;font-size:7.25px;line-height:8px;height:8px;color:#262626;font-family:'Liberation Serif', serif;left:215.5px;">- Inventur Mulchballen. Ernte und Ausbringung</div>
<div class="t" style="top:193px;font-size:7.25px;line-height:8px;height:8px;color:#262626;font-family:'Liberation Serif', serif;left:374.25px;letter-spacing:-0.027px;">Wird für die Biokontrolle gar</div>
<div class="t" style="top:201px;font-size:7.25px;line-height:8px;height:8px;color:#262626;font-family:'Liberation Serif', serif;left:374.25px;">nicht benötigt?</div>
<div class="t" style="top:209px;font-size:7.25px;line-height:8px;height:8px;color:#262626;font-family:'Liberation Serif', serif;left:374.25px;">/Gärtner/_Anbau/Gründüngung_</div>
<div class="t" style="top:218px;font-size:7.25px;line-height:8px;height:8px;color:#262626;font-family:'Liberation Serif', serif;left:374.25px;">Kleegras_Mulch/_Alles zu</div>
<div class="t" style="top:226px;font-size:7.25px;line-height:8px;height:8px;color:#262626;font-family:'Liberation Serif', serif;left:374.25px;">Kleegras und Mulch.ods</div>
<div class="t" style="top:238px;font-size:7.25px;line-height:8px;height:8px;color:#262626;font-family:'Liberation Serif', serif;left:215.5px;">- Zukaufliste Pflanzenschutzmittel ausfüllen.</div>
<div class="t" style="top:341px;font-size:7.25px;line-height:8px;height:8px;color:#262626;font-family:'Liberation Serif', serif;left:215.5px;">- Online Zugang zu Lexoffice vor Ort vorbereiten.</div>
<div class="t" style="top:353px;font-size:7.25px;line-height:8px;height:8px;color:#262626;font-family:'Liberation Serif', serif;left:215.5px;">- Zertifikate Check</div>
<div class="t" style="top:353px;font-size:7.25px;line-height:8px;height:8px;color:#262626;font-family:'Liberation Serif', serif;left:374.25px;">Sammelbestätigung, Reinsaat</div>
<div class="t" style="top:361px;font-size:7.25px;line-height:8px;height:8px;color:#262626;font-family:'Liberation Serif', serif;left:374.25px;">(AT), Bactiva (FiBL</div>
<div class="t" style="top:370px;font-size:7.25px;line-height:8px;height:8px;color:#262626;font-family:'Liberation Serif', serif;left:374.25px;">Betriebsmittelliste)</div>
<div class="t" style="top:381px;font-size:7.25px;line-height:8px;height:8px;color:#262626;font-family:'Liberation Serif', serif;left:215.5px;">- Biodiversitätsrichtline Bioland</div>
<div class="t" style="top:381px;font-size:7.25px;line-height:8px;height:8px;color:#262626;font-family:'Liberation Serif', serif;left:374.25px;letter-spacing:-0.026px;">Brauch aktuelle Schlagliste von</div>
<div class="t" style="top:389px;font-size:7.25px;line-height:8px;height:8px;color:#262626;font-family:'Liberation Serif', serif;left:374.25px;">ABCert</div>
</div>
<div class="p" style="filter:blur(0.3px)">
<svg class="l" width="800" height="400" viewBox="0 0 800 400">
<rect x="467.9" y="0" width="332.1" height="400" fill="#3a3a3a"/>
<rect x="467.9" y="0" width="332.1" height="27.2" fill="#2b2b2b"/>
<rect x="467.9" y="27.2" width="332.1" height="0.8" fill="#222222"/>
<rect x="467.3" y="0" width="0.8" height="400" fill="#262626"/>
<g transform="translate(475.6 14)"><path d="M4 0.6 L1 3.7 L4 6.8" fill="none" stroke="#8a8a8a" stroke-width="1.1"/></g>
<g transform="translate(492 14)"><path d="M1 0.6 L4 3.7 L1 6.8" fill="none" stroke="#dcdcdc" stroke-width="1.1"/></g>
<rect x="508" y="10" width="14.4" height="14.4" fill="#3b3b3b" rx="1.5"/>
<rect x="522.6" y="10" width="25.4" height="14.4" fill="#363636" rx="1.5"/>
<g transform="translate(556 13.9)"><rect x="0.5" y="0.5" width="7.2" height="6" fill="none" stroke="#dcdcdc" stroke-width="1"/><path d="M3.1 0.5 V6.5" stroke="#dcdcdc" stroke-width="0.9"/></g>
<rect x="574.3" y="13" width="0.6" height="9.4" fill="#484848"/>
<g transform="translate(584.4 14)"><rect x="1.8" y="0.2" width="4.4" height="1.8" rx="0.4" fill="#dedede"/><rect x="0.2" y="2.2" width="7.6" height="3.2" rx="0.9" fill="#dedede"/><rect x="1.8" y="4.2" width="4.4" height="2.6" fill="#dedede" stroke="#2b2b2b" stroke-width="0.5"/></g>
<rect x="707.5" y="14.4" width="7" height="6.4" fill="#c8c8c8" rx="1.6"/>
<rect x="709.2" y="17.05" width="3.6" height="1.1" fill="#2b2b2b"/>
<rect x="724.25" y="14.4" width="7" height="6.4" fill="#c8c8c8" rx="1.6"/>
<rect x="725.95" y="17.05" width="3.6" height="1.1" fill="#2b2b2b"/>
<rect x="727.2" y="15.8" width="1.1" height="3.6" fill="#2b2b2b"/>
<rect x="741.25" y="14.4" width="7" height="6.4" fill="#c8c8c8" rx="1.6"/>
<rect x="744.45" y="15.6" width="1.2" height="4" fill="#2b2b2b"/>
<rect x="743.55" y="16.1" width="1.2" height="0.9" fill="#2b2b2b"/>
<rect x="758.3" y="13" width="0.6" height="9.4" fill="#484848"/>
<rect x="771" y="14.1" width="4" height="1.2" fill="#6a6a6a"/>
<rect x="770" y="17.2" width="6" height="1" fill="#c4c4c4"/>
<rect x="771" y="20.1" width="4" height="1.2" fill="#6a6a6a"/>
<rect x="781.2" y="9.8" width="16.6" height="14.6" fill="#252525" rx="2"/>
<g transform="translate(786 13.8)"><rect x="2" y="2" width="5.2" height="5.2" rx="1" fill="#777" stroke="#8a8a8a" stroke-width="0.6"/><rect x="0.5" y="0.5" width="5.2" height="5.2" rx="1" fill="#2a2a2a" stroke="#c4c4c4" stroke-width="0.9"/></g>
<rect x="498" y="30.5" width="272.8" height="371" fill="#2a2a2a"/>
<rect x="498.75" y="31.2" width="271.25" height="370" fill="#ffffff"/>
<rect x="510" y="58.7" width="120" height="0.7" fill="#e0e0e0"/>
<rect x="638.75" y="58.7" width="120" height="0.7" fill="#e0e0e0"/>
<rect x="510" y="72.9" width="120" height="0.7" fill="#e0e0e0"/>
<rect x="510" y="92.05" width="248.75" height="0.9" fill="#4a4a4a"/>
<rect x="510" y="116.65" width="248.75" height="0.7" fill="#787878"/>
<rect x="603.5" y="133.1" width="1.4" height="1.4" fill="#111"/>
<rect x="603.5" y="145.6" width="1.4" height="1.4" fill="#111"/>
<rect x="510" y="152.05" width="248.75" height="0.9" fill="#4a4a4a"/>
<rect x="510" y="182.15" width="248.75" height="0.7" fill="#787878"/>
<rect x="603.5" y="197.9" width="1.4" height="1.4" fill="#111"/>
<rect x="603.5" y="210.8" width="1.4" height="1.4" fill="#111"/>
<rect x="510" y="216.75" width="248.75" height="0.9" fill="#4a4a4a"/>
<rect x="510" y="242.05" width="248.75" height="0.7" fill="#787878"/>
<rect x="603.5" y="257.5" width="1.4" height="1.4" fill="#111"/>
<rect x="603.5" y="270.3" width="1.4" height="1.4" fill="#111"/>
<rect x="510" y="276.45" width="248.75" height="0.7" fill="#787878"/>
<rect x="603.5" y="292.3" width="1.4" height="1.4" fill="#111"/>
<rect x="603.5" y="305.3" width="1.4" height="1.4" fill="#111"/>
<rect x="510" y="311.85" width="248.75" height="0.9" fill="#4a4a4a"/>
<rect x="510" y="336.65" width="248.75" height="0.7" fill="#787878"/>
<rect x="603.5" y="353.2" width="1.4" height="1.4" fill="#111"/>
<rect x="603.5" y="362.5" width="1.4" height="1.4" fill="#111"/>
<rect x="603.5" y="375.7" width="1.4" height="1.4" fill="#111"/>
<rect x="510" y="382.25" width="248.75" height="0.7" fill="#787878"/>
</svg>
<div class="t" style="top:-1px;font-size:5.9px;line-height:6px;height:6px;color:#cfcfcf;font-family:'Liberation Sans', sans-serif;left:472px;">Datei</div>
<div class="t" style="top:-1px;font-size:5.9px;line-height:6px;height:6px;color:#cfcfcf;font-family:'Liberation Sans', sans-serif;left:493.25px;letter-spacing:0.100px;">Bearbeiten</div>
<div class="t" style="top:-1px;font-size:5.9px;line-height:6px;height:6px;color:#cfcfcf;font-family:'Liberation Sans', sans-serif;left:530px;letter-spacing:-0.047px;">Ansicht</div>
<div class="t" style="top:-1px;font-size:5.9px;line-height:6px;height:6px;color:#cfcfcf;font-family:'Liberation Sans', sans-serif;left:557.75px;letter-spacing:-0.068px;">Gehen zu</div>
<div class="t" style="top:-1px;font-size:5.9px;line-height:6px;height:6px;color:#cfcfcf;font-family:'Liberation Sans', sans-serif;left:590.75px;letter-spacing:-0.075px;">Lesezeichen</div>
<div class="t" style="top:-1px;font-size:5.9px;line-height:6px;height:6px;color:#cfcfcf;font-family:'Liberation Sans', sans-serif;left:630.75px;transform:scaleX(1.1232);">Hilfe</div>
<div class="t" style="top:14px;font-size:6.8px;line-height:7px;height:7px;color:#c8cdd6;font-family:'Liberation Sans', sans-serif;left:511.6px;transform:scaleX(0.6876);">1</div>
<div class="t" style="top:14px;font-size:6.8px;line-height:7px;height:7px;color:#8c8c8c;font-family:'Liberation Sans', sans-serif;left:526px;letter-spacing:-0.288px;">von 2</div>
<div class="t" style="top:45px;font-size:9.6px;line-height:11px;height:11px;color:#1e1e1e;font-family:'Liberation Sans', sans-serif;left:518px;letter-spacing:-0.165px;">Sammelbestätigung</div>
<div class="t" style="top:62px;font-size:3.65px;line-height:4px;height:4px;color:#111;font-family:'DejaVu Sans', 'Liberation Sans', sans-serif;font-weight:700;left:511.75px;letter-spacing:-0.042px;">Listeninhaber</div>
<div class="t" style="top:62px;font-size:3.65px;line-height:4px;height:4px;color:#333;font-family:'DejaVu Sans', 'Liberation Sans', sans-serif;left:554.25px;transform:scaleX(0.8638);">SoLawi Vierlande e.V. - Ingo Böwer</div>
<div class="t" style="top:67px;font-size:3.65px;line-height:4px;height:4px;color:#333;font-family:'DejaVu Sans', 'Liberation Sans', sans-serif;left:554.25px;transform:scaleX(0.8798);">DE - 21039 Hamburg</div>
<div class="t" style="top:62px;font-size:3.65px;line-height:4px;height:4px;color:#111;font-family:'DejaVu Sans', 'Liberation Sans', sans-serif;font-weight:700;left:640.75px;letter-spacing:-0.068px;">Groups</div>
<div class="t" style="top:62px;font-size:3.65px;line-height:4px;height:4px;color:#333;font-family:'DejaVu Sans', 'Liberation Sans', sans-serif;left:690px;transform:scaleX(0.8755);">Standard</div>
<div class="t" style="top:76px;font-size:3.65px;line-height:4px;height:4px;color:#111;font-family:'DejaVu Sans', 'Liberation Sans', sans-serif;font-weight:700;left:511.75px;letter-spacing:-0.038px;">Erstellt am</div>
<div class="t" style="top:76px;font-size:3.65px;line-height:4px;height:4px;color:#333;font-family:'DejaVu Sans', 'Liberation Sans', sans-serif;left:554.25px;transform:scaleX(0.8520);">15.10.24 12:48</div>
<div class="t" style="top:97px;font-size:3.65px;line-height:4px;height:4px;color:#333;font-family:'DejaVu Sans', 'Liberation Sans', sans-serif;left:514px;letter-spacing:-0.022px;">Eggers, Thomas</div>
<div class="t" style="top:102px;font-size:3.65px;line-height:4px;height:4px;color:#333;font-family:'DejaVu Sans', 'Liberation Sans', sans-serif;left:514px;">Allermöher Deich 119</div>
<div class="t" style="top:107px;font-size:3.65px;line-height:4px;height:4px;color:#333;font-family:'DejaVu Sans', 'Liberation Sans', sans-serif;left:514px;">DE - 21037 Hamburg</div>
<div class="t" style="top:97px;font-size:3.65px;line-height:4px;height:4px;color:#333;font-family:'DejaVu Sans', 'Liberation Sans', sans-serif;left:597px;">Kundennummer: DE-HH-009-00367-A</div>
<div class="t" style="top:102px;font-size:3.65px;line-height:4px;height:4px;color:#333;font-family:'DejaVu Sans', 'Liberation Sans', sans-serif;left:597px;">Codenummer: DE-ÖKO-009 LC</div>
<div class="t" style="top:107px;font-size:3.65px;line-height:4px;height:4px;color:#333;font-family:'DejaVu Sans', 'Liberation Sans', sans-serif;left:597px;">Landwirtschafts-Consulting GmbH</div>
<div class="t" style="top:122px;font-size:3.65px;line-height:4px;height:4px;color:#111;font-family:'DejaVu Sans', 'Liberation Sans', sans-serif;font-weight:700;left:514px;">Standard EU Verordnung</div>
<div class="t" style="top:122px;font-size:3.65px;line-height:4px;height:4px;color:#111;font-family:'DejaVu Sans', 'Liberation Sans', sans-serif;font-weight:700;left:597px;">Dokumenten-ID: LC-Bio-20240109-367A</div>
<div class="t" style="top:127px;font-size:3.65px;line-height:4px;height:4px;color:#333;font-family:'DejaVu Sans', 'Liberation Sans', sans-serif;left:597px;letter-spacing:-0.032px;">Gültigkeit: 09.01.24 - 31.01.25</div>
<div class="t" style="top:132px;font-size:3.65px;line-height:4px;height:4px;color:#333;font-family:'DejaVu Sans', 'Liberation Sans', sans-serif;left:608px;">Gemüse-Jungpflanzen (Pflanzen, ökologisch/biologisch)</div>
<div class="t" style="top:140px;font-size:3.65px;line-height:4px;height:4px;color:#111;font-family:'DejaVu Sans', 'Liberation Sans', sans-serif;font-weight:700;left:597px;">Überwacht:</div>
<div class="t" style="top:145px;font-size:3.65px;line-height:4px;height:4px;color:#333;font-family:'DejaVu Sans', 'Liberation Sans', sans-serif;left:608px;">Standard EU Verordnung, überwacht seit 21.04.19 / Gültig am 15.10.24</div>
<div class="t" style="top:157px;font-size:3.65px;line-height:4px;height:4px;color:#333;font-family:'DejaVu Sans', 'Liberation Sans', sans-serif;left:514px;">HADI Handelsgesellschaft für</div>
<div class="t" style="top:162px;font-size:3.65px;line-height:4px;height:4px;color:#333;font-family:'DejaVu Sans', 'Liberation Sans', sans-serif;left:514px;">Gartenbaubedarf mbH</div>
<div class="t" style="top:167px;font-size:3.65px;line-height:4px;height:4px;color:#333;font-family:'DejaVu Sans', 'Liberation Sans', sans-serif;left:514px;">Am Redder 59</div>
<div class="t" style="top:172px;font-size:3.65px;line-height:4px;height:4px;color:#333;font-family:'DejaVu Sans', 'Liberation Sans', sans-serif;left:514px;">DE - 21436 Marschacht</div>
<div class="t" style="top:157px;font-size:3.65px;line-height:4px;height:4px;color:#333;font-family:'DejaVu Sans', 'Liberation Sans', sans-serif;left:597px;">Kundennummer: DE-NI-006-15548-H</div>
<div class="t" style="top:162px;font-size:3.65px;line-height:4px;height:4px;color:#333;font-family:'DejaVu Sans', 'Liberation Sans', sans-serif;left:597px;">Codenummer: DE-ÖKO-006 ABCERT</div>
<div class="t" style="top:187px;font-size:3.65px;line-height:4px;height:4px;color:#111;font-family:'DejaVu Sans', 'Liberation Sans', sans-serif;font-weight:700;left:514px;">Standard EU Verordnung</div>
<div class="t" style="top:187px;font-size:3.65px;line-height:4px;height:4px;color:#111;font-family:'DejaVu Sans', 'Liberation Sans', sans-serif;font-weight:700;left:597px;">Dokumenten-ID: DE-ÖKO-006.276-0042886.2024.002</div>
<div class="t" style="top:192px;font-size:3.65px;line-height:4px;height:4px;color:#333;font-family:'DejaVu Sans', 'Liberation Sans', sans-serif;left:597px;letter-spacing:-0.032px;">Gültigkeit: 09.09.24 - 31.01.26</div>
<div class="t" style="top:197px;font-size:3.65px;line-height:4px;height:4px;color:#333;font-family:'DejaVu Sans', 'Liberation Sans', sans-serif;left:608px;">Jungpflanzen; Saatgut (Pflanzen, ökologisch/biologisch)</div>
<div class="t" style="top:205px;font-size:3.65px;line-height:4px;height:4px;color:#111;font-family:'DejaVu Sans', 'Liberation Sans', sans-serif;font-weight:700;left:597px;">Überwacht:</div>
<div class="t" style="top:210px;font-size:3.65px;line-height:4px;height:4px;color:#333;font-family:'DejaVu Sans', 'Liberation Sans', sans-serif;left:608px;">Standard EU Verordnung, überwacht seit 21.04.19 / Gültig am 15.10.24</div>
<div class="t" style="top:222px;font-size:3.65px;line-height:4px;height:4px;color:#333;font-family:'DejaVu Sans', 'Liberation Sans', sans-serif;left:514px;">Gartenbau Homann GbR</div>
<div class="t" style="top:227px;font-size:3.65px;line-height:4px;height:4px;color:#333;font-family:'DejaVu Sans', 'Liberation Sans', sans-serif;left:514px;">Einster Hauptstr. 20</div>
<div class="t" style="top:232px;font-size:3.65px;line-height:4px;height:4px;color:#333;font-family:'DejaVu Sans', 'Liberation Sans', sans-serif;left:514px;">DE - 27337 Blender</div>
<div class="t" style="top:222px;font-size:3.65px;line-height:4px;height:4px;color:#333;font-family:'DejaVu Sans', 'Liberation Sans', sans-serif;left:597px;">Kundennummer: DE-NI-006-11283-A</div>
<div class="t" style="top:227px;font-size:3.65px;line-height:4px;height:4px;color:#333;font-family:'DejaVu Sans', 'Liberation Sans', sans-serif;left:597px;">Codenummer: DE-ÖKO-006 ABCERT</div>
<div class="t" style="top:246px;font-size:3.65px;line-height:4px;height:4px;color:#111;font-family:'DejaVu Sans', 'Liberation Sans', sans-serif;font-weight:700;left:514px;">Standard EU Verordnung</div>
<div class="t" style="top:246px;font-size:3.65px;line-height:4px;height:4px;color:#111;font-family:'DejaVu Sans', 'Liberation Sans', sans-serif;font-weight:700;left:597px;">Dokumenten-ID: DE-ÖKO-006.276-0006170.2024.001</div>
<div class="t" style="top:252px;font-size:3.65px;line-height:4px;height:4px;color:#333;font-family:'DejaVu Sans', 'Liberation Sans', sans-serif;left:597px;letter-spacing:-0.032px;">Gültigkeit: 29.01.24 - 31.01.26</div>
<div class="t" style="top:256px;font-size:3.65px;line-height:4px;height:4px;color:#333;font-family:'DejaVu Sans', 'Liberation Sans', sans-serif;left:608px;">Jungpflanzen (Pflanzen, ökologisch/biologisch)</div>
<div class="t" style="top:264px;font-size:3.65px;line-height:4px;height:4px;color:#111;font-family:'DejaVu Sans', 'Liberation Sans', sans-serif;font-weight:700;left:597px;">Überwacht:</div>
<div class="t" style="top:269px;font-size:3.65px;line-height:4px;height:4px;color:#333;font-family:'DejaVu Sans', 'Liberation Sans', sans-serif;left:608px;">Standard EU Verordnung, überwacht seit 07.08.19 / Gültig am 15.10.24</div>
<div class="t" style="top:281px;font-size:3.65px;line-height:4px;height:4px;color:#111;font-family:'DejaVu Sans', 'Liberation Sans', sans-serif;font-weight:700;left:514px;">Bioland</div>
<div class="t" style="top:281px;font-size:3.65px;line-height:4px;height:4px;color:#111;font-family:'DejaVu Sans', 'Liberation Sans', sans-serif;font-weight:700;left:597px;">Dokumenten-ID: N1JYY4EIVABK</div>
<div class="t" style="top:286px;font-size:3.65px;line-height:4px;height:4px;color:#333;font-family:'DejaVu Sans', 'Liberation Sans', sans-serif;left:597px;letter-spacing:-0.032px;">Gültigkeit: 29.01.24 - 30.04.26</div>
<div class="t" style="top:291px;font-size:3.65px;line-height:4px;height:4px;color:#333;font-family:'DejaVu Sans', 'Liberation Sans', sans-serif;left:608px;">Jungpflanzen (Pflanzen, ökologisch/biologisch)</div>
<div class="t" style="top:299px;font-size:3.65px;line-height:4px;height:4px;color:#111;font-family:'DejaVu Sans', 'Liberation Sans', sans-serif;font-weight:700;left:597px;">Überwacht:</div>
<div class="t" style="top:304px;font-size:3.65px;line-height:4px;height:4px;color:#333;font-family:'DejaVu Sans', 'Liberation Sans', sans-serif;left:608px;">Bioland, überwacht seit 21.04.19 / Gültig am 15.10.24</div>
<div class="t" style="top:317px;font-size:3.65px;line-height:4px;height:4px;color:#333;font-family:'DejaVu Sans', 'Liberation Sans', sans-serif;left:514px;">Hof Jeebel GmbH &amp; Co. KG</div>
<div class="t" style="top:322px;font-size:3.65px;line-height:4px;height:4px;color:#333;font-family:'DejaVu Sans', 'Liberation Sans', sans-serif;left:514px;">Jeebel 17</div>
<div class="t" style="top:327px;font-size:3.65px;line-height:4px;height:4px;color:#333;font-family:'DejaVu Sans', 'Liberation Sans', sans-serif;left:514px;">DE - 29410 Salzwedel</div>
<div class="t" style="top:317px;font-size:3.65px;line-height:4px;height:4px;color:#333;font-family:'DejaVu Sans', 'Liberation Sans', sans-serif;left:597px;">Kundennummer: DE-ST-006-16499-ABD</div>
<div class="t" style="top:322px;font-size:3.65px;line-height:4px;height:4px;color:#333;font-family:'DejaVu Sans', 'Liberation Sans', sans-serif;left:597px;">Codenummer: DE-ÖKO-006 ABCERT</div>
<div class="t" style="top:341px;font-size:3.65px;line-height:4px;height:4px;color:#111;font-family:'DejaVu Sans', 'Liberation Sans', sans-serif;font-weight:700;left:514px;">Standard EU Verordnung</div>
<div class="t" style="top:341px;font-size:3.65px;line-height:4px;height:4px;color:#111;font-family:'DejaVu Sans', 'Liberation Sans', sans-serif;font-weight:700;left:597px;">Dokumenten-ID: DE-ÖKO-006.276-0004899.2023.002</div>
<div class="t" style="top:347px;font-size:3.65px;line-height:4px;height:4px;color:#333;font-family:'DejaVu Sans', 'Liberation Sans', sans-serif;left:597px;letter-spacing:-0.032px;">Gültigkeit: 26.09.23 - 31.01.25</div>
<div class="t" style="top:352px;font-size:3.65px;line-height:4px;height:4px;color:#333;font-family:'DejaVu Sans', 'Liberation Sans', sans-serif;left:608px;">Baumschulwaren; Pflanzgut; Flatrrut; Stauden; Jungpflanzen; Topfkräuter;</div>
<div class="t" style="top:357px;font-size:3.65px;line-height:4px;height:4px;color:#333;font-family:'DejaVu Sans', 'Liberation Sans', sans-serif;left:608px;">Kartoffeln; Zierpflanzen; Saatgut (Pflanzen, ökologisch/biologisch)</div>
<div class="t" style="top:361px;font-size:3.65px;line-height:4px;height:4px;color:#333;font-family:'DejaVu Sans', 'Liberation Sans', sans-serif;left:608px;">Kartoffeln (Verarbeitet, ökologisch/biologisch)</div>
<div class="t" style="top:369px;font-size:3.65px;line-height:4px;height:4px;color:#111;font-family:'DejaVu Sans', 'Liberation Sans', sans-serif;font-weight:700;left:597px;">Überwacht:</div>
<div class="t" style="top:375px;font-size:3.65px;line-height:4px;height:4px;color:#333;font-family:'DejaVu Sans', 'Liberation Sans', sans-serif;left:608px;">Standard EU Verordnung, überwacht seit 07.08.19 / Gültig am 15.10.24</div>
<div class="t" style="top:387px;font-size:3.65px;line-height:4px;height:4px;color:#111;font-family:'DejaVu Sans', 'Liberation Sans', sans-serif;font-weight:700;left:514px;">Bioland</div>
<div class="t" style="top:387px;font-size:3.65px;line-height:4px;height:4px;color:#111;font-family:'DejaVu Sans', 'Liberation Sans', sans-serif;font-weight:700;left:597px;">Dokumenten-ID: 1AFRSG43KBXKW</div>
<div class="t" style="top:392px;font-size:3.65px;line-height:4px;height:4px;color:#333;font-family:'DejaVu Sans', 'Liberation Sans', sans-serif;left:597px;letter-spacing:-0.032px;">Gültigkeit: 26.09.23 - 31.01.25</div>
</div>
<div class="p" style="filter:blur(0.22px)">
<svg class="l" width="800" height="400" viewBox="0 0 800 400">
<rect x="91.7" y="376.2" width="106.2" height="26" fill="#272727" rx="2"/>
<rect x="124.7" y="391.2" width="40.2" height="9" fill="#303030"/>
<rect x="128.3" y="397.7" width="33.7" height="3" fill="#f4f4f4"/>
<rect x="126" y="392.6" width="9" height="0.7" fill="#585858"/>
<rect x="140" y="392.2" width="11" height="0.7" fill="#6a6a6a"/>
<rect x="158" y="392.6" width="5" height="0.7" fill="#7a7a7a"/>
<rect x="130" y="395.2" width="8" height="0.6" fill="#5a5a5a"/>
<rect x="153" y="395.2" width="6" height="0.6" fill="#666"/>
</svg>
<div class="t" style="top:380px;font-size:6.15px;line-height:7px;height:7px;color:#e6e6e6;font-family:'Liberation Sans', sans-serif;left:100.5px;letter-spacing:0.017px;-webkit-text-stroke:0.1px currentColor;">Sammelbestätigung BioC.pdf</div>
</div>
</div></body></html>
